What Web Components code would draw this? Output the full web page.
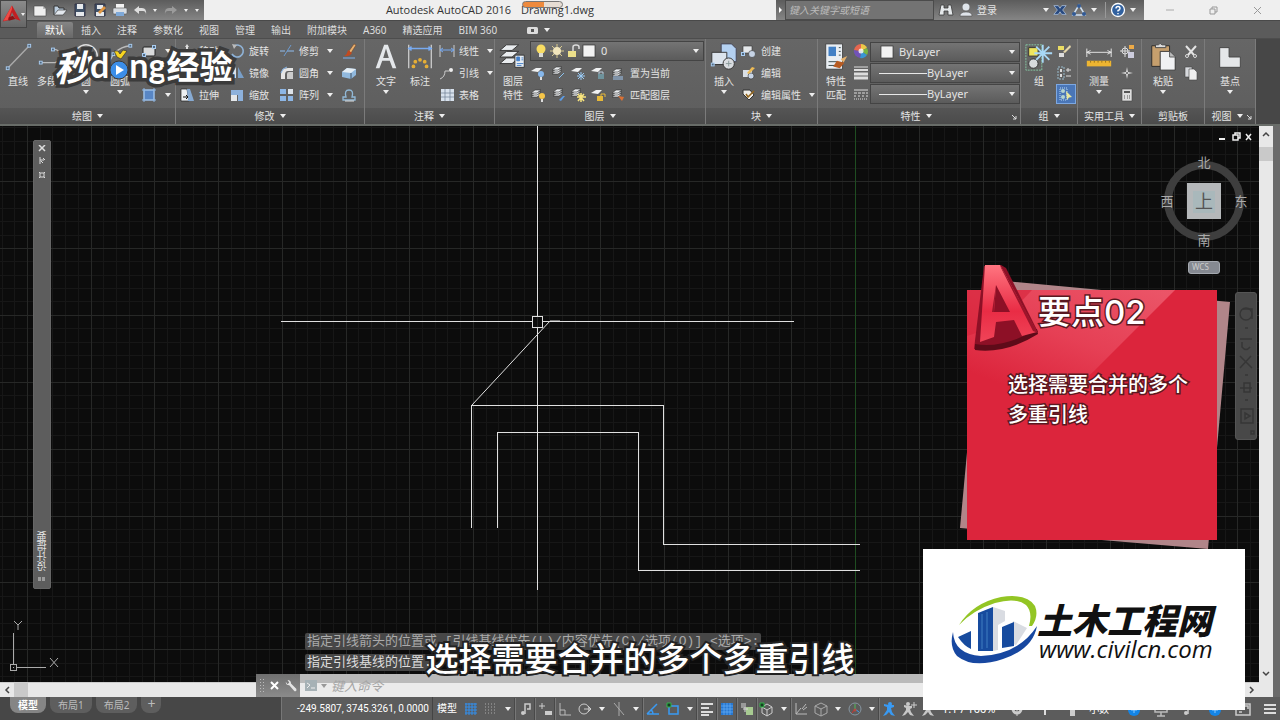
<!DOCTYPE html>
<html lang="zh-CN">
<head>
<meta charset="utf-8">
<meta name="viewport" content="width=device-width, initial-scale=1">
<title>Autodesk AutoCAD 2016 Drawing1.dwg</title>
<style>
  html, body { height: 100%; margin: 0; }
  body {
    background: #454545;
    color: #e4e4e4;
    font: 10px/14px "Noto Sans", "Noto Sans CJK SC", sans-serif;
    overflow: hidden;
  }
</style>
</head>
<body>
<cad-app></cad-app>
<script>
const BASE = `
  * { box-sizing: border-box; }
  button, input, select { font: inherit; color: inherit; margin: 0; padding: 0; border: 0; background: none; }
  a { color: inherit; text-decoration: none; }
  .caret { width: 0; height: 0; flex: none; border: 3px solid transparent; border-top: 4px solid #eee; border-bottom: 0; }
`;

const sheets = (x, y, c) => `<g fill="${c || '#e8ebee'}" stroke="#333" stroke-width=".6"><path d="M${x} ${y + 6}l4-3h6l-4 3z"/><path d="M${x} ${y + 4}l4-3h6l-4 3z"/><path d="M${x} ${y + 2}l4-3h6l-4 3z"/></g>`;
const node = (x, y) => `<rect x="${x - 1.5}" y="${y - 1.5}" width="3" height="3" fill="#53697f" stroke="#a9cdf2"/>`;

// name: [viewBox size, markup]
const ICONS = {
  logo: [26, '<path d="M13 3L23 21l-6-2-4-8-3 9-8 2z" fill="#c31f22"/><path d="M13 3L3 21l5-1 5-13z" fill="#ee4b45"/><path d="M9 17l5-2 3 4-8 2z" fill="#8f1214"/>'],
  new: [16, '<path d="M2 4h9l3 3v7H2z" fill="#eee" stroke="#444" stroke-width=".6"/><path d="M11 4v3h3" fill="#bbb"/>'],
  open: [16, '<path d="M2 13V4h4l1 2h5v2" fill="#bcd" stroke="#333"/><path d="M2 13l4-5h9l-4 5z" fill="#e3e8ee" stroke="#444" stroke-width=".7"/>'],
  save: [16, '<path d="M3 2h10v12H3z" fill="#40536a" stroke="#334"/><path d="M5 2h6v5H5zM4 10h8v4H4z" fill="#e6e9ec"/>'],
  saveas: [16, '<path d="M3 2h10v12H3z" fill="#40536a" stroke="#334"/><path d="M5 3h6v4H5zM4 10h8v4H4z" fill="#e6e9ec"/><path d="M6 10l6-6 2 2-6 6z" fill="#e09642"/>'],
  print: [16, '<path d="M4 2h8v5H4z" fill="#f3f3f3"/><rect x="1" y="6" width="14" height="6" rx="1" fill="#d9dde2" stroke="#555" stroke-width=".6"/><path d="M4 10h8v4H4z" fill="#7fa9d8"/>'],
  undo: [16, '<path d="M7 4L2 8l5 4V9h4q3 0 3 4 1-7-4-7H7z" fill="#dedede"/>'],
  redo: [16, '<path d="M9 4l5 4-5 4V9H5q-3 0-3 4-1-7 4-7h3z" fill="#9b9b9b"/>'],
  binoculars: [16, '<path d="M3 3h3v3h4V3h3l2 10h-5V9H6v4H1z" fill="#e5e8ea" stroke="#3a3a3a" stroke-width=".8"/>'],
  user: [16, '<circle cx="8" cy="5" r="3.5" fill="#dfe4ea"/><path d="M2 14q0-4 6-4t6 4z" fill="#dfe4ea" stroke="#444" stroke-width=".5"/>'],
  exchange: [16, '<path d="M1 3h5l2 3 2-3h5l-4 5 4 5h-5l-2-3-2 3H1l4-5z" fill="#28497f" stroke="#b5cbe8" stroke-width=".8"/>'],
  a360: [16, '<path d="M8 3l6 10H2z" fill="none" stroke="#cfe0f2" stroke-width="1.5"/><circle cx="8" cy="4" r="2" fill="#325a95"/><circle cx="3" cy="12" r="2" fill="#325a95"/><circle cx="13" cy="12" r="2" fill="#325a95"/>'],
  help: [16, '<circle cx="8" cy="8" r="6.5" fill="#31619f" stroke="#fff" stroke-width="1.3"/><path d="M6 6.5Q6 4.500 8 4.500T10 6.500Q10 8 8 8.500V9.500M8 11v1.300" fill="none" stroke="#fff" stroke-width="1.400"/>'],
  ribbon: [16, '<rect x="2" y="5" width="11" height="7" rx="1.500" fill="#ddd"/><rect x="6" y="7" width="3" height="3" fill="#555"/>'],
  line: [32, '<path d="M6 27L27 5" stroke="#aaa" stroke-width="1.500"/>' + node(5, 28) + node(28, 4)],
  pline: [32, '<path d="M3 22h16q8-1 6-8t-8-6H17" fill="none" stroke="#bbb" stroke-width="1.500"/>' + node(4, 22) + node(17, 8)],
  circle: [32, '<circle cx="16" cy="15" r="12" fill="none" stroke="#ddd" stroke-width="1.500"/>' + node(16, 15)],
  arc: [32, '<path d="M3 28Q7 6 27 4" fill="none" stroke="#bbb" stroke-width="1.500"/>' + node(27, 4) + node(9, 13)],
  rect: [16, '<rect x="2" y="4" width="12" height="9" rx="1" fill="#d9dadb" stroke="#222"/>' + node(3, 12) + node(13, 4)],
  ellipse: [16, '<ellipse cx="8" cy="8" rx="6" ry="4" fill="none" stroke="#ddd"/>' + node(8, 8)],
  hatch: [16, '<rect x="3" y="3" width="10" height="10" fill="#5886c5" stroke="#b9d2ef"/><path d="M1 3h14M3 1v14M13 1v14M1 13h14" stroke="#8db6e4"/>'],
  move: [16, '<path d="M8 1l2 3H9v3h3V6l3 2-3 2V9H9v3h1l-2 3-2-3h1V9H4v1L1 8l3-2v1h3V4H6z" fill="#ddd"/>'],
  rotate: [16, '<path d="M5 3a6 6 0 1 1-2 8" fill="none" stroke="#8fb2d6" stroke-width="1.600"/><path d="M3 1l5 1-3 4z" fill="#bbb"/>'],
  trim: [16, '<path d="M1 8h5M8 8h7" stroke="#8fbdf0"/><path d="M5 13l7-11" stroke="#6d9bd0"/>'],
  brush: [16, '<path d="M8 8l5-7 2 1-5 8z" fill="#e8b070" stroke="#6d3c1c" stroke-width=".5"/><path d="M7 7l4 3q-3 4-8 3 3-1 4-6z" fill="#c24a20"/><path d="M2 15h12" stroke="#7bb0ec"/>'],
  copy: [16, '<circle cx="6" cy="6" r="4" fill="none" stroke="#ccc"/><circle cx="10" cy="10" r="4" fill="none" stroke="#8db7e8"/>'],
  mirror: [16, '<path d="M7 2v11H1z" fill="#dce1e8"/><path d="M9 2v11h6z" fill="#789ec7"/>'],
  fillet: [16, '<path d="M2 14V9q0-6 7-6h5v3H9q-3 0-3 4v4z" fill="#e5e5e5"/><path d="M8 14V9q0-2 2-2h4v7z" fill="#ccc"/><path d="M2 8q1-5 6-6" fill="none" stroke="#86b4e8"/>'],
  box: [16, '<path d="M1 7l5-4 9 1v6l-5 4-9-2z" fill="#91b9de"/><path d="M1 7l5-4 9 1-5 4z" fill="#e4edf4"/><path d="M10 8v6" stroke="#456"/>'],
  stretch: [16, '<path d="M2 2h6l2 12H2z" fill="#eceff2" stroke="#222" stroke-width=".7"/><path d="M8 2h3l4 12H9z" fill="#87aad2"/><path d="M4 10h5M7 8l2 2-2 2" stroke="#111" fill="none"/>'],
  scale: [16, '<path d="M2 3h12v11H9V8H2z" fill="#8db1dc"/><rect x="2" y="8" width="6" height="6" fill="#e4e7ea"/>'],
  array: [16, '<path d="M1 2h6v5H1zM9 9h5v5H9zM1 9h6v5H1z" fill="#8db6e5"/><path d="M9 2h5v5H9z" fill="#dde3ea"/>'],
  offset: [16, '<path d="M2 13h12v-3h-3q2-7-3-7t-3 7H2z" fill="none" stroke="#91b9d8" stroke-width="1.300"/><path d="M4 14h9" stroke="#ddd"/>'],
  text: [32, '<path d="M5 28L14 3h4l9 25h-4l-3-8h-8l-3 8zM13 17h6l-3-10z" fill="#e4e7ea" fill-rule="evenodd"/>'],
  dim: [32, '<path d="M4 3v25M28 3v25" stroke="#ddd" stroke-width="1.200"/><path d="M4 7h24M7 5L4 7l3 2M25 5l3 2-3 2" stroke="#78aaf0" fill="none" stroke-width="1.500"/><g fill="#e5ae36"><circle cx="16" cy="19" r="2"/><circle cx="11" cy="21" r="2"/><circle cx="21" cy="21" r="2"/><circle cx="9" cy="26" r="2"/><circle cx="23" cy="26" r="2"/></g>'],
  linear: [16, '<path d="M1 2v12M15 2v12" stroke="#ccc"/><path d="M1 7h14M4 5L1 7l3 2M12 5l3 2-3 2" stroke="#78aaf0" fill="none"/>'],
  leader: [16, '<path d="M1 14Q6 12 6 6h4" stroke="#ccc" fill="none"/><circle cx="12" cy="5" r="2" fill="#eee"/>'],
  table: [16, '<rect x="2" y="2" width="13" height="12" fill="#d8e1ec"/><path d="M2 6h13M2 10h13M6 2v12M11 2v12" stroke="#6f8094" stroke-width=".7"/>'],
  layers: [32, '<g fill="#e9ecef" stroke="#333"><path d="M2 23l7-6h13l-7 6z"/><path d="M2 16l7-6h13l-7 6z"/><path d="M2 9l7-6h13l-7 6z"/></g><path d="M18 14h10v13H18z" fill="#e8eef4" stroke="#333"/><path d="M20 16h3v4h-3zM25 17h2M25 19h2M20 23h7M20 25h5" fill="#437fc9" stroke="#437fc9"/>'],
  bulb: [16, '<circle cx="8" cy="6" r="4.500" fill="#f8dc62"/><path d="M6 10h4v4H6z" fill="#dcdcd5"/>'],
  sun: [16, '<path d="M8 1v14M1 8h14M3 3l10 10M13 3L3 13" stroke="#d9ca8d"/><circle cx="8" cy="8" r="4" fill="#f1e5bc"/>'],
  unlock: [16, '<path d="M8 8V4q0-2 3-2t3 2v2" fill="none" stroke="#ddd" stroke-width="1.500"/><path d="M3 8h8v6H3z" fill="#ecdf8a"/>'],
  white: [16, '<rect x="2" y="2" width="12" height="12" fill="#f2f2f2" stroke="#333" stroke-width=".7"/>'],
  layoff: [16, '<path d="M1 6l5-3h6l-4 4z" fill="#f0f1f2"/><circle cx="11" cy="9" r="3" fill="#86b7eb"/><path d="M10 12h2v3h-2z" fill="#ddd"/>'],
  layiso: [16, sheets(2, 3) + '<path d="M9 13l5-5" stroke="#8bc1ed"/>'],
  layfrz: [16, '<path d="M1 6l5-3h6l-4 4z" fill="#f0f1f2"/><path d="M11 7v8M7 11h8M8 8l6 6M14 8l-6 6" stroke="#9acbf6"/>'],
  laylock: [16, '<path d="M1 6l5-3h6l-4 4z" fill="#f0f1f2"/><path d="M8 9h6v5H8z" fill="#6f939c"/><path d="M9 9V7h4v2" fill="none" stroke="#bcd"/>'],
  laycur: [16, sheets(3, 4, '#92b9de') + '<path d="M9 10l5-4" stroke="#ddd"/>'],
  layon: [16, sheets(1, 4) + '<circle cx="12" cy="9" r="3" fill="#f5c548"/><path d="M11 12h2v3h-2z" fill="#ddd"/>'],
  layuniso: [16, sheets(3, 3) + '<path d="M9 13l4-4h2l-4 5z" fill="#5d9ce5"/>'],
  laythaw: [16, sheets(1, 3) + '<path d="M11 6v9M7 10h9M8 7l6 7M14 7l-6 7" stroke="#f8e47e" stroke-width="1.500"/>'],
  layunlock: [16, '<path d="M1 6l5-3h6l-4 4z" fill="#f0f1f2"/><path d="M7 9h6v5H7z" fill="#e7b939"/><path d="M11 9V7h4v3" fill="none" stroke="#e7b939"/>'],
  laymatch: [16, sheets(2, 4) + '<path d="M8 9l6 1-2 4z" fill="#db7134"/>'],
  setcur: [16, sheets(2, 5) + '<path d="M3 12h10M3 14h10" stroke="#9fc5ee"/>'],
  insert: [32, '<path d="M13 2h11l5 5v14H13z" fill="#b4d1f2" stroke="#445"/><path d="M3 11h16v13H3z" fill="#dce4ed" stroke="#333"/><circle cx="21" cy="23" r="6" fill="#d9dce0" stroke="#333"/><path d="M18 23h6M21 20v6" stroke="#899"/>' + node(4, 24)],
  create: [16, '<path d="M2 3h9v7H2z" fill="#e5e8eb" stroke="#333" stroke-width=".6"/><circle cx="11" cy="11" r="3.500" fill="#c7d4e6" stroke="#333" stroke-width=".6"/>' + node(2, 11)],
  editblk: [16, '<path d="M2 5h9v7H2z" fill="#d9dfe6"/><circle cx="10" cy="11" r="3" fill="#c7d4e6" stroke="#333" stroke-width=".6"/><path d="M6 8l5-6 3 1-6 6z" fill="#eebb55"/>'],
  editatt: [16, '<path d="M2 3h7l4 5-5 5-6-6z" fill="#f0eee9" stroke="#333"/><path d="M5 7l2 3 6-6" stroke="#93651b" fill="none" stroke-width="1.500"/>'],
  match: [32, '<path d="M5 2h18v27H5z" fill="#e9eef3" stroke="#444"/><path d="M8 5h8v10H8z" fill="#4280c5"/><path d="M19 6h2M19 10h2M19 14h2M8 21h10M8 25h7" stroke="#344"/><path d="M21 18l7-3-4 7z" fill="#e4b26f"/><path d="M17 20l8 2-5 6-7-2z" fill="#b75b22"/>'],
  wheel: [16, '<path d="M8 8V1a7 7 0 0 1 6 4z" fill="#edc747"/><path d="M8 8l6-3a7 7 0 0 1 0 7z" fill="#79b443"/><path d="M8 8l6 4a7 7 0 0 1-7 3z" fill="#3996d4"/><path d="M8 8l-1 7a7 7 0 0 1-6-8z" fill="#7153b7"/><path d="M8 8L1 7a7 7 0 0 1 7-6z" fill="#e66750"/><circle cx="8" cy="8" r="2.500" fill="#fff" opacity=".8"/>'],
  weight: [16, '<path d="M1 2h14" stroke="#ddd"/><path d="M1 5h14" stroke="#ddd" stroke-width="2"/><path d="M1 9h14M1 13h14" stroke="#ddd" stroke-width="3"/>'],
  ltype: [16, '<g stroke="#ddd"><path d="M1 3h14"/><path d="M1 6h14" stroke-dasharray="3 1"/><path d="M1 9h14" stroke-dasharray="2 2"/><path d="M1 12h14" stroke-dasharray="1 1"/></g>'],
  group: [32, '<rect x="2" y="3" width="17" height="27" fill="none" stroke="#86cba5" stroke-dasharray="2 1"/><path d="M5 6h10v9H5z" fill="#eee55e" stroke="#333"/><circle cx="10" cy="23" r="5" fill="#d7dadd" stroke="#333"/><path d="M20 3v19M11 12h19M13 5l14 14M27 5L13 19" stroke="#a8d8f7" stroke-width="2"/>'],
  grpedit: [16, '<path d="M2 3h6v4H2z" fill="#eadc63"/><path d="M3 10h5v4H3z" fill="#ddd"/><path d="M7 9l7-7 1 2-6 6z" fill="#e6d8aa"/>'],
  ungroup: [16, '<path d="M2 2h6v12H2z" fill="none" stroke="#9bc" stroke-dasharray="2 1"/><path d="M4 4h2v3H4zM4 9h2v3H4z" fill="#ddd"/><path d="M10 5h5M12 3v4M10 11h5" stroke="#ddd"/>'],
  grpsel: [16, '<path d="M2 2h7v12H2z" fill="none" stroke="#b7d6f2" stroke-dasharray="1 1"/><circle cx="5" cy="5" r="2" fill="#b5d4d0"/><circle cx="5" cy="11" r="2" fill="#b5d4d0"/><path d="M8 5l6 6-3 .5L9 14z" fill="#e9e8a0"/>'],
  measure: [32, '<path d="M3 7v9M29 7v9M3 11h26M7 9l-4 2 4 2M25 9l4 2-4 2" fill="none" stroke="#e8e8e8"/><path d="M3 20h26v6H3z" fill="#edb531"/><path d="M7 20v2M11 20v2M15 20v2M19 20v2M23 20v2M27 20v2" stroke="#98721c"/>'],
  idpoint: [16, '<circle cx="6" cy="8" r="3" fill="none" stroke="#ddd"/><path d="M6 3v11M1 8h10" stroke="#ddd"/><path d="M10 2h5v4h-5z" fill="#edaa47"/><path d="M9 9h6v6H9z" fill="#ccd"/>'],
  point: [16, '<path d="M8 2l1 5 5 1-5 1-1 5-1-5-5-1 5-1z" fill="#ddd"/><circle cx="8" cy="8" r="1" fill="#555"/>'],
  calc: [16, '<path d="M3 2h10v12H3z" fill="#ddd" stroke="#444" stroke-width=".6"/><path d="M5 4h6v2H5z" fill="#555"/><path d="M5 9h1M8 9h1M10 9h1M5 11h1M8 11h1M10 11h1" stroke="#555"/>'],
  paste: [32, '<path d="M4 4h19v22H4z" fill="#c69f6d" stroke="#2b2b2b"/><path d="M8 6V3h3q2-3 4 0h4v3z" fill="#ddd" stroke="#444"/><path d="M13 10h10l6 6v14H13z" fill="#f0f1f3" stroke="#333"/><path d="M23 10v6h6" fill="#bbb" stroke="#555"/>'],
  cut: [16, '<path d="M3 3l8 9M13 3l-8 9" stroke="#e4e4e4" stroke-width="2"/><circle cx="4" cy="13" r="1.500" fill="none" stroke="#ddd"/><circle cx="12" cy="13" r="1.500" fill="none" stroke="#ddd"/>'],
  copyclip: [16, '<path d="M2 2h7v10H2z" fill="#d8dade" stroke="#444" stroke-width=".6"/><path d="M6 4h5l3 3v8H6z" fill="#eee" stroke="#444" stroke-width=".6"/>'],
  base: [32, '<path d="M5 6h10v10h12v11H5z" fill="#e5e7e9" stroke="#444"/>'],
  grid: [16, '<path d="M3 2v12M6 2v12M9 2v12M12 2v12M2 3h12M2 6h12M2 9h12M2 12h12" stroke="#338fed"/>'],
  dots: [16, '<g stroke="#aaa" stroke-dasharray="1 2"><path d="M2 3h12M2 6h12M2 9h12M2 12h12"/></g>'],
  infer: [16, '<path d="M8 13V3h5v5h-3" fill="none" stroke="#ccc" stroke-width="1.500"/><circle cx="6" cy="12" r="2" fill="#ccc"/>'],
  dyn: [16, '<path d="M2 5h6M5 2v6" stroke="#ccc"/><path d="M8 10h7v4H8z" fill="#ccc"/>'],
  ortho: [16, '<path d="M3 2v12h11M3 9h5v5" stroke="#bbb" fill="none"/>'],
  polar: [16, '<circle cx="7" cy="8" r="5" fill="none" stroke="#ccc"/><path d="M7 8h7M11 5l3 3-3 3" stroke="#ccc" fill="none"/>'],
  iso: [16, '<path d="M3 2l10 12M8 1v14" stroke="#aaa"/>'],
  track: [16, '<path d="M2 13h12M2 13L12 3M8 13q0-3-2-4" stroke="#399af3" fill="none" stroke-width="1.500"/>'],
  osnap: [16, '<path d="M4 5h9v8H4z" stroke="#399af3" fill="none" stroke-width="1.500"/><path d="M2 2h4v4H2z" fill="#153f22" stroke="#34b44a"/>'],
  lwt: [16, '<path d="M2 3h12M2 7h8M2 11h12M2 14h8" stroke="#ddd" stroke-width="2"/>'],
  transp: [16, '<path d="M2 2h12v12H2z" fill="#2777cf"/><path d="M2 5h12M2 8h12M2 11h12M5 2v12M8 2v12M11 2v12" stroke="#68b0f5" stroke-width=".7"/>'],
  cycle: [16, '<path d="M7 6h7v8H7z" fill="#a7ca91"/><path d="M2 2h5v5H2z" fill="#999"/><path d="M4 8h5M6 6v5" stroke="#ddd"/>'],
  osnap3: [16, '<path d="M8 3l5 3v6l-5 3-5-3V6zM3 6l5 3 5-3M8 9v6" stroke="#ccc" fill="none"/><path d="M1 2h4v4H1z" fill="#153f22" stroke="#34b44a"/>'],
  ducs: [16, '<path d="M3 2v11h11M3 13l5-6M9 8l4-5M10 9l4-3" stroke="#bbb" fill="none"/>'],
  cube: [16, '<path d="M8 2l6 3v7l-6 3-6-3V5zM2 5l6 3 6-3M8 8v7" stroke="#aaa" fill="none"/>'],
  gizmo: [16, '<circle cx="8" cy="8" r="6" fill="none" stroke="#8796a1"/><path d="M8 3v5" stroke="#55b957"/><path d="M8 8l4 3" stroke="#3b9df1"/><path d="M8 8l-3 4" stroke="#c33"/><circle cx="8" cy="9" r="1.500" fill="#b54a3c"/>'],
  anno: [16, '<path d="M2 15l4-6V6L3 5V3l5 1h5v2l-3 1 1 4 3 4-4-1-2-3-3 3z" fill="#399af3"/><circle cx="9" cy="3" r="2" fill="#399af3"/>'],
  anno2: [16, '<path d="M1 15l4-6V7L3 6V4l5 1h3v2l-2 1 1 3 3 4-4-1-2-3-3 3z" fill="#c7c7c7"/><circle cx="7" cy="3" r="2" fill="#c7c7c7"/><path d="M13 1v6M10 4h6" stroke="#ccc"/>'],
  gear: [16, '<circle cx="8" cy="8" r="4" fill="none" stroke="#ccc" stroke-width="3"/><path d="M8 1v14M1 8h14" stroke="#ccc"/>'],
  plus: [16, '<path d="M8 2v12M2 8h12" stroke="#ddd" stroke-width="2"/>'],
  ruler: [16, '<path d="M6 2h5v13H6z" fill="#ccc"/>'],
  blueDot: [16, '<circle cx="8" cy="9" r="6" fill="#1385e8"/><path d="M8 6v6M5 9h6" stroke="#8cc9ff"/>'],
  monitor: [16, '<path d="M2 3h12v8H2zM8 11v4M4 15h8" fill="none" stroke="#bbb" stroke-width="1.500"/>'],
  clean: [16, '<path d="M1 3h14v11H1zM3 6h5M10 5h3v3M7 11H4" fill="none" stroke="#ccc" stroke-width="1.500"/>'],
  menu: [16, '<path d="M2 4h12M2 8h12M2 12h12" stroke="#ddd" stroke-width="2"/>'],
  wrench: [16, '<path d="M2 3q0 4 4 4l6 7q3 0 2-3L8 5q0-4-4-4l2 3-2 2z" fill="#e4e4e4"/>']
};

class CadIcon extends HTMLElement {
  connectedCallback() {
    const [box, body] = ICONS[this.getAttribute('name')];
    const size = this.getAttribute('size') || 16;
    this.attachShadow({mode: 'open'}).innerHTML = `
      <style>:host { display: block; flex: none; } svg { display: block; }</style>
      <svg width="${size}" height="${size}" viewBox="0 0 ${box} ${box}" aria-hidden="true">${body}</svg>`;
  }
}

class ToolButton extends HTMLElement {
  connectedCallback() {
    const big = this.hasAttribute('big');
    const label = this.getAttribute('label');
    this.attachShadow({mode: 'open'}).innerHTML = `
      <style>${BASE}
        :host { display: block; }
        button { display: flex; align-items: center; gap: 4px; height: 22px; width: 100%; white-space: nowrap; }
        button.big { flex-direction: column; gap: 2px; height: 66px; padding-top: 2px; }
        .caret { margin-left: 4px; }
        .big .caret { margin: 0; }
        .big span { white-space: pre-line; }
        :host([on]) button { width: 20px; height: 20px; justify-content: center; background: #4a76b7; border: 1px solid #7da8e1; }
      </style>
      <button class="${big ? 'big' : ''}" aria-label="${label || this.getAttribute('tip')}">
        <cad-icon name="${this.getAttribute('icon')}" size="${big ? 30 : 16}"></cad-icon>
        ${label ? `<span>${label}</span>` : ''}
        ${this.hasAttribute('menu') ? '<i class="caret"></i>' : ''}
      </button>`;
  }
}

class RibbonPanel extends HTMLElement {
  connectedCallback() {
    this.attachShadow({mode: 'open'}).innerHTML = `
      <style>${BASE}
        :host { display: flex; flex-direction: column; flex: none; border-right: 1px solid #7b7b7b; box-shadow: inset -1px 0 #505050; }
        .body { display: flex; height: 69px; padding: 1px 1px 2px; background: linear-gradient(#666, #5f5f5f); }
        .foot { display: flex; align-items: center; justify-content: center; gap: 5px; height: 16px; background: linear-gradient(#555, #4b4b4b); position: relative; }
        .launch { position: absolute; right: 3px; bottom: 4px; }
        :host([launcher]) .foot { padding-right: 6px; }
      </style>
      <div class="body"><slot></slot></div>
      <div class="foot"><span>${this.getAttribute('name')}</span>
        ${this.hasAttribute('plain') ? '' : '<i class="caret"></i>'}
        ${this.hasAttribute('launcher') ? '<svg class="launch" width="6" height="6"><path d="M1 1l4 4M5 2v3H2" stroke="#ddd" fill="none"/></svg>' : ''}
      </div>`;
  }
}

class TitleBar extends HTMLElement {
  connectedCallback() {
    this.attachShadow({mode: 'open'}).innerHTML = `
      <style>${BASE}
        :host { display: grid; grid-template: 21px 17px / 27px 1fr; background: #5b5b5b; }
        .app { grid-row: 1 / 3; height: 28px; display: flex; align-items: center; background: linear-gradient(#8b8b8b, #666); border: 1px solid #444; }
        .app .caret { border-width: 3px 2px 0; margin-left: -2px; }
        .top { display: flex; background: #efefef; border-bottom: 1px solid #494949; }
        .quick, .info { display: flex; align-items: center; background: linear-gradient(#5c5c5c, #858585); }
        .quick { width: 177px; gap: 4px; padding-left: 5px; }
        .quick .caret { margin: 0 2px 0 1px; border-width: 3px 2px 0; }
        .title { flex: 1; display: flex; align-items: center; justify-content: center; gap: 10px; color: #333; font: 11px/14px "Open Sans", sans-serif; position: relative; }
        .title b { font-weight: 400; position: relative; }
        .pill { position: absolute; left: 1px; top: -2px; width: 41px; height: 7px; border: 1px solid #777; border-radius: 4px; background: linear-gradient(90deg, #ee8a3d 55%, #e6ddd4 55%); }
        .info { gap: 4px; width: 368px; }
        .tri { border: 3px solid transparent; border-left-color: #fff; margin: 0 -1px 0 3px; border-right: 0; }
        input { width: 149px; height: 20px; padding: 0 3px; background: #737373; border: 1px solid #4b4b4b; font-style: italic; }
        input::placeholder { color: #bbb; opacity: 1; }
        .login { width: 62px; margin-left: -1px; }
        .help { display: flex; align-items: center; gap: 4px; margin-left: 4px; padding-left: 4px; border-left: 1px solid #999; }
        .win { width: 136px; display: flex; align-items: center; justify-content: space-around; padding-left: 4px; }
        nav { display: flex; align-items: center; padding-left: 10px; }
        nav a { padding: 1px 8px; height: 16px; color: #ddd; }
        nav a.on { background: linear-gradient(#858585, #696969); color: #fff; border-radius: 2px 2px 0 0; }
        nav .caret { margin-left: 3px; }
      </style>
      <button class="app" aria-label="应用程序菜单"><cad-icon name="logo" size="22"></cad-icon><i class="caret"></i></button>
      <div class="top">
        <div class="quick">
          ${['new', 'open', 'save', 'saveas', 'print', 'undo'].map(n => `<cad-icon name="${n}"></cad-icon>`).join('')}
          <i class="caret"></i><cad-icon name="redo"></cad-icon><i class="caret"></i><i class="caret"></i>
        </div>
        <div class="title"><span>Autodesk AutoCAD 2016</span><b>Drawing1.dwg<i class="pill"></i></b></div>
        <div class="info">
          <i class="tri"></i>
          <input aria-label="搜索" placeholder="键入关键字或短语">
          <cad-icon name="binoculars"></cad-icon><cad-icon name="user"></cad-icon>
          <a class="login" href="#">登录</a><i class="caret"></i>
          <cad-icon name="exchange" size="14"></cad-icon><cad-icon name="a360"></cad-icon><i class="caret"></i>
          <div class="help"><cad-icon name="help"></cad-icon><i class="caret"></i></div>
        </div>
        <div class="win">
          <svg width="8" height="8"><path d="M0 4h8" stroke="#aaa"/></svg>
          <svg width="9" height="9"><path d="M1 3h5v5H1zM3 3V1h5v5H6" fill="none" stroke="#999"/></svg>
          <svg width="9" height="9"><path d="M1 1l7 7M8 1L1 8" stroke="#999"/></svg>
        </div>
      </div>
      <nav>
        ${['默认', '插入', '注释', '参数化', '视图', '管理', '输出', '附加模块', 'A360', '精选应用', 'BIM 360'].map((t, i) => `<a href="#" class="${i ? '' : 'on'}">${t}</a>`).join('')}
        <cad-icon name="ribbon" style="margin-left: 20px"></cad-icon><i class="caret"></i>
      </nav>`;
  }
}

class AppRibbon extends HTMLElement {
  connectedCallback() {
    const small = (icon, tip, menu) => `<tool-button icon="${icon}" tip="${tip}" ${menu ? 'menu' : ''}></tool-button>`;
    const row = (icon, label, menu) => `<tool-button icon="${icon}" label="${label}" ${menu ? 'menu' : ''}></tool-button>`;
    const big = (icon, label, menu) => `<tool-button big icon="${icon}" label="${label}" ${menu ? 'menu' : ''}></tool-button>`;
    const icons = list => list.map(n => small(n, n)).join('');
    this.attachShadow({mode: 'open'}).innerHTML = `
      <style>${BASE}
        :host { display: flex; height: 88px; border-top: 1px solid #4d4d4d; border-bottom: 2px solid #686c68; background: #474747; }
        .col { display: flex; flex-direction: column; }
        .row { display: flex; height: 22px; align-items: center; gap: 4px; }
        .bigs > tool-button { width: 34px; }
        .bigs { display: flex; }
        .props { gap: 1px; padding-top: 2px; margin-left: 1px; }
        .pick { display: flex; align-items: center; width: 150px; height: 20px; padding-left: 8px; border: 1px solid #444; background: linear-gradient(#747474, #5b5b5b); position: relative; font-size: 11px; }
        .pick .caret { position: absolute; right: 4px; pointer-events: none; }
        .pick select { flex: 1; min-width: 0; height: 18px; padding-left: 4px; appearance: none; outline: 0; }
        .pick hr { width: 48px; margin: 0 -4px 0 0; border: 0; border-top: 1px solid #e8e8e8; }
        .layer { width: 174px; margin: 1px 0; padding-left: 2px; }
      </style>
      <ribbon-panel name="绘图" style="width: 176px">
        <div class="bigs">${big('line', '直线')}${big('pline', '多段线')}${big('circle', '圆', 1)}${big('arc', '圆弧', 1)}</div>
        <div class="col" style="margin-left: 4px">${small('rect', '矩形', 1)}${small('ellipse', '椭圆', 1)}${small('hatch', '图案填充', 1)}</div>
      </ribbon-panel>
      <ribbon-panel name="修改" style="width: 189px">
        <div class="col" style="margin-left: 2px; width: 50px">${row('move', '移动')}${row('copy', '复制')}${row('stretch', '拉伸')}</div>
        <div class="col" style="width: 50px">${row('rotate', '旋转')}${row('mirror', '镜像')}${row('scale', '缩放')}</div>
        <div class="col" style="width: 62px">${row('trim', '修剪', 1)}${row('fillet', '圆角', 1)}${row('array', '阵列', 1)}</div>
        <div class="col">${icons(['brush', 'box', 'offset'])}</div>
      </ribbon-panel>
      <ribbon-panel name="注释" style="width: 130px">
        <div class="bigs" style="margin-left: 3px">${big('text', '文字', 1)}${big('dim', '标注')}</div>
        <div class="col" style="margin-left: 2px">${row('linear', '线性', 1)}${row('leader', '引线', 1)}${row('table', '表格')}</div>
      </ribbon-panel>
      <ribbon-panel name="图层" style="width: 211px">
        <div class="bigs">${big('layers', '图层\n特性')}</div>
        <div class="col">
          <div class="pick layer">
            <cad-icon name="bulb"></cad-icon><cad-icon name="sun"></cad-icon><cad-icon name="unlock"></cad-icon><cad-icon name="white"></cad-icon>
            <select aria-label="图层"><option>0</option></select><i class="caret"></i>
          </div>
          <div class="row">${icons(['layoff', 'layiso', 'layfrz', 'laylock'])}${row('setcur', '置为当前')}</div>
          <div class="row">${icons(['layon', 'layuniso', 'laythaw', 'layunlock'])}${row('laymatch', '匹配图层')}</div>
        </div>
      </ribbon-panel>
      <ribbon-panel name="块" style="width: 112px">
        <div class="bigs">${big('insert', '插入', 1)}</div>
        <div class="col">${row('create', '创建')}${row('editblk', '编辑')}${row('editatt', '编辑属性', 1)}</div>
      </ribbon-panel>
      <ribbon-panel name="特性" launcher style="width: 203px">
        <div class="bigs">${big('match', '特性\n匹配')}</div>
        <div class="col">${icons(['wheel', 'weight', 'ltype'])}</div>
        <div class="col props">
          <div class="pick"><cad-icon name="white"></cad-icon><select aria-label="对象颜色"><option>ByLayer</option></select><i class="caret"></i></div>
          <div class="pick"><hr><select aria-label="线宽"><option>ByLayer</option></select><i class="caret"></i></div>
          <div class="pick"><hr><select aria-label="线型"><option>ByLayer</option></select><i class="caret"></i></div>
        </div>
      </ribbon-panel>
      <ribbon-panel name="组" style="width: 57px">
        <div class="bigs">${big('group', '组')}</div>
        <div class="col">${icons(['grpedit', 'ungroup'])}<tool-button on icon="grpsel" tip="组选择"></tool-button></div>
      </ribbon-panel>
      <ribbon-panel name="实用工具" style="width: 64px">
        <div class="bigs" style="margin-left: 3px">${big('measure', '测量', 1)}</div>
        <div class="col" style="margin-left: 3px">${icons(['idpoint', 'point', 'calc'])}</div>
      </ribbon-panel>
      <ribbon-panel name="剪贴板" plain style="width: 63px">
        <div class="bigs" style="margin-left: 3px">${big('paste', '粘贴', 1)}</div>
        <div class="col" style="margin-left: 3px">${icons(['cut', 'copyclip'])}</div>
      </ribbon-panel>
      <ribbon-panel name="视图" launcher style="width: 51px">
        <div class="bigs" style="margin-left: 7px">${big('base', '基点', 1)}</div>
      </ribbon-panel>`;
  }
}

class ViewCube extends HTMLElement {
  connectedCallback() {
    this.attachShadow({mode: 'open'}).innerHTML = `
      <style>${BASE}
        :host { display: grid; width: 92px; grid-template: 16px 62px 16px / 18px 1fr 18px; place-items: center; color: #aaa; font-size: 13px; position: relative; }
        .ring { position: absolute; left: 6px; top: 7px; width: 80px; height: 80px; border: 8px solid #3e3e3e; border-radius: 50%; }
        span { position: relative; }
        .n { grid-area: 1 / 2; } .w { grid-area: 2 / 1; } .e { grid-area: 2 / 3; } .s { grid-area: 3 / 2; }
        button { grid-area: 2 / 2; position: relative; width: 34px; height: 36px; background: #b5b8ba; color: #555; font-size: 18px; line-height: 30px; }
        button span { display: inline-block; width: 22px; height: 22px; line-height: 20px; background: #a9b8bb; }
        .wcs { grid-area: 4 / 2; margin-top: 13px; width: 32px; height: 13px; border: 1px solid #a5a9b0; border-radius: 3px; background: #858991; color: #ccc; font-size: 8px; line-height: 10px; text-align: left; padding-left: 3px; }
      </style>
      <i class="ring"></i>
      <span class="n">北</span><span class="w">西</span><button><span>上</span></button>
      <span class="e">东</span><span class="s">南</span><div class="wcs">WCS</div>`;
  }
}

class DesignPalette extends HTMLElement {
  connectedCallback() {
    this.attachShadow({mode: 'open'}).innerHTML = `
      <style>${BASE}
        :host { display: flex; flex-direction: column; align-items: center; justify-content: space-between; width: 18px; padding: 4px 0; background: #5d5d5d; border: 1px solid #666; border-radius: 2px; box-sizing: border-box; }
        svg { display: block; }
        .name { writing-mode: vertical-rl; transform: rotate(180deg); }
        .end { display: flex; flex-direction: column; align-items: center; gap: 5px; }
      </style>
      <svg width="8" height="36" fill="none" stroke="#ddd"><path d="M1 0l6 6M7 0L1 6" stroke-width="1.500"/><path d="M2 12v7M2 15h4M5 13l2 2M5 18l-2-2"/><rect x="2" y="28" width="4" height="4"/><path d="M1 27l1 1M7 27l-1 1M1 33l1-1M7 33l-1-1"/></svg>
      <div class="end"><span class="name">设计提要</span>
      <svg width="8" height="8" stroke="#ddd"><path d="M0 2h3M4 2h3M0 4h3M4 4h3"/></svg></div>`;
  }
}

class NavBar extends HTMLElement {
  connectedCallback() {
    this.attachShadow({mode: 'open'}).innerHTML = `
      <style>:host { display: block; width: 22px; height: 148px; border: 1px solid #555; box-sizing: border-box; border-radius: 3px; background: #484848; }</style>
      <svg width="20" height="146" fill="none" stroke="#363636" stroke-width="1.500">
        <circle cx="10" cy="21" r="6"/><path d="M7 16h9v10M4 46h12M6 49v5q4 5 8 0M4 63l12 12M15 63L4 75M8 90h6v9H8zM4 95h12M5 116h12v14H5zM9 120l5 3-5 3z"/>
        <path d="M9 35h3M9 82h3M9 107h3M15 138h3v3h-3z"/>
      </svg>`;
  }
}

class DrawingArea extends HTMLElement {
  connectedCallback() {
    this.attachShadow({mode: 'open'}).innerHTML = `
      <style>
        :host { display: block; flex: 1; min-height: 0; position: relative; overflow: hidden; background: #0c0c0c; }
        .sheet { position: absolute; inset: 0; width: 100%; height: 100%; }
        design-palette { position: absolute; left: 33px; top: 14px; bottom: 93px; }
        view-cube { position: absolute; right: 9px; top: 28px; }
        nav-bar { position: absolute; right: 2px; top: 166px; }
        .doc { position: absolute; right: 6px; top: 6px; }
      </style>
      <svg class="sheet" fill="none" stroke="#e0e0e0" shape-rendering="crispEdges">
        <g id="grid"></g>
        <path d="M471.500 402V279.500H663.500V418.500H860M497.500 402V306.500H638.500V444.500H860"/>
        <path d="M472 279L550 195h10" shape-rendering="auto"/>
        <path d="M537.500 0V190M537.500 201V464M281 195.500H532M543 195.500H794"/>
        <rect x="532.500" y="190.500" width="10" height="11"/>
        <g stroke="#aaa"><path d="M13.500 507v31M17 541.500h29M10.500 538.500h6v6h-6zM13 541.500h1"/>
        <path d="M14 495l4 4 4-4M18 499v5M50 532l8 9M58 532l-8 9" shape-rendering="auto"/></g>
      </svg>
      <design-palette></design-palette>
      <svg class="doc" width="34" height="10" stroke="#eee" fill="none"><path d="M0 7h6" stroke-width="2"/><path d="M14 3h5v5h-5zM16 3V1h5v5h-2M27 2l5 6M32 2l-5 6" stroke-width="1.500"/></svg>
      <view-cube></view-cube>
      <nav-bar></nav-bar>`;
    this.drawGrid();
  }

  // five minor cells for each major one
  drawGrid() {
    let minor = '';
    let major = '';
    for (let i = -2; i * 12.74 < innerWidth; i++) {
      const d = `M${Math.round(27 + i * 12.74) + .5} 0v${innerHeight}`;
      if (i % 5) minor += d; else major += d;
    }
    for (let i = -4; i * 13.38 < innerHeight; i++) {
      const d = `M0 ${Math.round(55 + i * 13.38) + .5}h${innerWidth}`;
      if (i % 5) minor += d; else major += d;
    }
    this.shadowRoot.getElementById('grid').innerHTML = `
      <path d="${minor}" stroke="#171717"/>
      <path d="${major}" stroke="#272827"/>
      <path d="M855.5 0v${innerHeight}" stroke="#1f4d21"/>`;
  }
}

class CommandLine extends HTMLElement {
  connectedCallback() {
    this.attachShadow({mode: 'open'}).innerHTML = `
      <style>${BASE}
        :host { display: flex; flex-direction: column; }
        .log { align-self: flex-start; margin: 0 0 4px 49px; padding: 0 2px; height: 17px; border-radius: 2px; background: #474747; color: #aaa; font: 13px/17px "Liberation Mono", "Noto Sans CJK SC", monospace; white-space: nowrap; }
        .last { color: #ddd; margin-bottom: 3px; }
        .bar { display: flex; height: 23px; }
        .grip { width: 44px; display: flex; align-items: center; justify-content: space-between; padding: 0 2px 0 3px; background: linear-gradient(#6f6f6f, #8b8b8b); }
        .field { flex: 1; display: flex; align-items: center; gap: 4px; padding-left: 5px; background: linear-gradient(#bababa 9px, #ebebeb 9px); color: #999; }
        .field .caret { border-top-color: #999; }
        input { flex: 1; outline: 0; font-size: 13px; font-style: italic; }
        input::placeholder { color: #a5a5a5; opacity: 1; }
      </style>
      <div class="log">指定引线箭头的位置或 [引线基线优先(L)/内容优先(C)/选项(O)] &lt;选项&gt;:</div>
      <div class="log last">指定引线基线的位置:</div>
      <div class="bar">
        <div class="grip">
          <svg width="6" height="16" stroke="#bbb" stroke-dasharray="1 2"><path d="M1.500 1v14M4.500 1v14"/></svg>
          <svg width="9" height="9" stroke="#fff" stroke-width="2"><path d="M1 1l7 7M8 1L1 8"/></svg>
          <cad-icon name="wrench" size="14"></cad-icon>
        </div>
        <div class="field">
          <svg width="12" height="11"><path d="M0 0h12v11H0z" fill="#a6b1b5"/><path d="M2 3l3 2-3 3M6 8h4" stroke="#eee" fill="none"/></svg><i class="caret"></i>
          <input aria-label="命令" placeholder="键入命令">
        </div>
      </div>`;
  }
}

class StatusBar extends HTMLElement {
  connectedCallback() {
    const seq = 'grid dots v | infer | dyn | ortho polar v iso v | track osnap v | lwt | transp | cycle | osnap3 v | ducs cube v gizmo v | anno anno2 anno2';
    const cell = n => n === 'v' ? '<span class="drop"><i class="caret"></i></span>' : n === '|' ? '<i class="sep"></i>' : `<button aria-label="${n}"><cad-icon name="${n}"></cad-icon></button>`;
    this.attachShadow({mode: 'open'}).innerHTML = `
      <style>${BASE}
        :host { display: flex; height: 23px; background: #474747; }
        nav { display: flex; width: 281px; padding-left: 10px; gap: 4px; }
        nav a { height: 16px; padding: 1px 8px; background: #5e5e5e; border-radius: 0 0 8px 8px; color: #bbb; }
        nav a.on { background: #858585; color: #fff; font-weight: 700; }
        nav a.add { font-size: 14px; padding: 0 6px; }
        .tray { flex: 1; display: flex; align-items: center; padding-left: 15px; background: #5c5c5c; border-left: 1px solid #777; color: #fff; white-space: nowrap; overflow: hidden; }
        .xyz { width: 132px; font-family: Roboto, sans-serif; }
        .model { margin-left: 3px; padding: 0 4px; border-left: 1px solid #444; line-height: 23px; }
        .tray button, .drop { flex: none; width: 20px; height: 22px; display: flex; align-items: center; justify-content: center; }
        .drop { width: 14px; }
        .sep { width: 1px; height: 22px; margin-right: -1px; background: #777; box-shadow: -1px 0 #494949; }
        .scale { margin-left: 3px; font-size: 11px; }
        .rest { flex: 1; display: flex; align-items: center; justify-content: space-between; padding: 0 0 0 12px; }
      </style>
      <nav><a class="on" href="#">模型</a><a href="#">布局1</a><a href="#">布局2</a><a class="add" href="#">+</a></nav>
      <div class="tray">
        <span class="xyz">-249.5807, 3745.3261, 0.0000</span><span class="model">模型</span>
        ${seq.split(' ').map(cell).join('')}
        <span class="scale">1:1 / 100%</span>
        <div class="rest">
          ${cell('gear')}${cell('plus')}${cell('ruler')}<span>小数</span><i></i>${cell('blueDot')}${cell('monitor')}${cell('infer')}${cell('blueDot')}${cell('clean')}${cell('menu')}
        </div>
      </div>`;
  }
}

class TipCard extends HTMLElement {
  connectedCallback() {
    this.attachShadow({mode: 'open'}).innerHTML = `
      <style>${BASE}
        :host { display: block; width: 250px; height: 250px; position: relative; color: #fff; }
        svg { position: absolute; left: -8px; top: -26px; }
        .text { position: relative; padding: 4px 0 0 41px; font-family: "Noto Sans CJK SC", sans-serif; font-weight: 500; -webkit-text-stroke: 3px #5b1820; paint-order: stroke fill; }
        h2 { margin: 0; padding-left: 30px; font: 500 33px/36px Inter, "Noto Sans CJK SC", sans-serif; white-space: nowrap; }
        p { margin: 39px 0 0; font-size: 20px; line-height: 30px; white-space: pre; }
      </style>
      <svg width="274" height="288" viewBox="959 264 274 288">
        <defs>
          <linearGradient id="face" x1="0" y1="0" x2="0" y2="1"><stop offset="0" stop-color="#ff7580"/><stop offset=".6" stop-color="#e92c45"/><stop offset="1" stop-color="#f04458"/></linearGradient>
          <linearGradient id="shine" x1=".9" y1="0" x2=".3" y2="1"><stop offset="0" stop-color="#ee6072"/><stop offset=".45" stop-color="#e8465b"/><stop offset=".85" stop-color="#dc253c"/></linearGradient>
        </defs>
        <path d="M983 279L1230 302 1208 549 960 528z" fill="#b18589"/>
        <path d="M967 290h250v250H967z" fill="#dc253c"/>
        <path d="M967 290h208l-82 82-60 50h-66z" fill="url(#shine)" opacity=".8"/>
        <path d="M967 290h65l-34 36-31 10z" fill="#d5233a" opacity=".6"/>
        <path d="M984 266l-10 83q16 3 37-4l27-13-32-64-5-3z" fill="#8d1026"/>
        <path d="M975 344q28 5 62-15l1 5q-32 20-63 16z" fill="#5e0b19"/>
        <path d="M985 265h15l37 67-15 4-8-16-18 2-2 15-14 5zM996 285l-2 27h16z" fill="url(#face)" fill-rule="evenodd"/>
        <path d="M996 285l-2 27-2 0zM1000 265l1 3 32 63 5 2z" fill="#9c152b"/>
      </svg>
      <div class="text"><h2>要点02</h2><p>选择需要合并的多个\n多重引线</p></div>`;
  }
}

class BrandMark extends HTMLElement {
  connectedCallback() {
    this.attachShadow({mode: 'open'}).innerHTML = `
      <style>${BASE}
        :host { display: flex; align-items: center; height: 40px; color: #fff; font: 700 33px/40px "Noto Sans CJK SC", sans-serif; }
        span { position: relative; -webkit-text-stroke: 7px #3b3b3b; paint-order: stroke fill; }
        .slant { font-size: 36px; font-style: italic; }
        .en { font: 700 34px/40px Lato, sans-serif; }
        svg { display: block; position: relative; z-index: 1; }
      </style>
      <span class="slant">秒</span><span class="en">d</span>
      <svg width="20" height="36"><path d="M5 4l3 6 4 2 6-8-4-1-3 4-2-3z" fill="#f7d420" stroke="#333" stroke-width=".7"/><circle cx="10" cy="23" r="9" fill="#3c8ee8" stroke="#3b3b3b"/><path d="M7 18l8 5-8 5z" fill="#fff"/></svg>
      <span class="en">ng</span><span>经验</span>`;
  }
}

class SiteBadge extends HTMLElement {
  connectedCallback() {
    this.attachShadow({mode: 'open'}).innerHTML = `
      <style>${BASE}
        :host { display: flex; align-items: center; gap: 1px; width: 322px; height: 161px; padding-left: 28px; background: #fff; color: #111; box-sizing: border-box; }
        div { display: flex; flex-direction: column; }
        strong { font: italic 900 35px/37px "Noto Sans CJK SC", sans-serif; margin-left: -2px; }
        a { font: italic 24px/23px "Open Sans", sans-serif; }
      </style>
      <svg width="87" height="72" viewBox="951 592 87 72">
        <path d="M959 623q14-22 42-28 26-4 34 9 4 10-3 20l-3 0q4-14-3-21-10-8-31-2-22 7-36 22z" fill="#93c524"/>
        <path d="M993 605l12 4v10l-7 4v25l-5 1zM1013 619l14 7-11 17-3-1z" fill="#d9dce2"/>
        <path d="M978 611l15-6v44l-15 0zM1002 625l12-5v24l-12 2zM958 635l13-6v18q-7-3-13-12z" fill="#174b9e"/>
        <path d="M982 612v35M987 610v36" stroke="#417fc1"/>
        <path d="M953 630q1 22 28 24 38-2 56-30-4 23-34 33-30 10-46-3-8-9-4-24z" fill="#1747a0"/>
      </svg>
      <div><strong>土木工程网</strong><a href="#">www.civilcn.com</a></div>`;
  }
}

class CadApp extends HTMLElement {
  connectedCallback() {
    this.attachShadow({mode: 'open'}).innerHTML = `
      <style>${BASE}
        :host { display: flex; flex-direction: column; height: 100vh; position: relative; overflow: hidden; }
        .work { flex: 1; min-height: 0; display: flex; position: relative; }
        .view { flex: 1; min-width: 0; display: flex; flex-direction: column; }
        .hbar { height: 15px; display: flex; align-items: center; gap: 4px; padding: 0 4px; background: #e8e8e8; border-top: 1px solid #ccc; }
        .thumb { width: 14px; height: 14px; background: #c9c9c9; }
        .push { margin-left: auto; }
        .vbar { width: 14px; display: flex; flex-direction: column; align-items: center; gap: 10px; padding: 5px 0 20px; background: #e8e8e8; }
        .vbar svg:last-child { margin-top: auto; }
        .edge { width: 7px; background: #6a6a6a; }
        svg { display: block; flex: none; fill: none; stroke: #444; stroke-width: 1.5px; }
        command-line { position: absolute; left: 256px; right: 35px; bottom: 0; }
        brand-mark { position: absolute; left: 54px; top: 45px; }
        tip-card { position: absolute; right: 63px; top: 290px; }
        site-badge { position: absolute; right: 35px; bottom: 10px; }
        .subtitle { position: absolute; left: 0; right: 0; bottom: 43px; margin: 0; text-align: center; color: #fff; font: 500 33px/40px "Noto Sans CJK SC", sans-serif; -webkit-text-stroke: 4px #222; paint-order: stroke fill; pointer-events: none; }
      </style>
      <title-bar></title-bar>
      <app-ribbon></app-ribbon>
      <div class="work">
        <div class="view">
          <drawing-area></drawing-area>
          <div class="hbar">
            <svg width="6" height="8"><path d="M5 1L2 4l3 3"/></svg><i class="thumb"></i>
            <svg class="push" width="6" height="8"><path d="M1 1l3 3-3 3"/></svg>
          </div>
        </div>
        <div class="vbar"><svg width="8" height="6"><path d="M1 5l3-3 3 3"/></svg><i class="thumb"></i><svg width="8" height="6"><path d="M1 1l3 3 3-3"/></svg></div>
        <div class="edge"></div>
        <command-line></command-line>
      </div>
      <status-bar></status-bar>
      <brand-mark></brand-mark>
      <tip-card></tip-card>
      <p class="subtitle">选择需要合并的多个多重引线</p>
      <site-badge></site-badge>`;
  }
}

customElements.define('cad-icon', CadIcon);
customElements.define('tool-button', ToolButton);
customElements.define('ribbon-panel', RibbonPanel);
customElements.define('title-bar', TitleBar);
customElements.define('app-ribbon', AppRibbon);
customElements.define('view-cube', ViewCube);
customElements.define('design-palette', DesignPalette);
customElements.define('nav-bar', NavBar);
customElements.define('drawing-area', DrawingArea);
customElements.define('command-line', CommandLine);
customElements.define('status-bar', StatusBar);
customElements.define('tip-card', TipCard);
customElements.define('brand-mark', BrandMark);
customElements.define('site-badge', SiteBadge);
customElements.define('cad-app', CadApp);
</script>
</body>
</html>
